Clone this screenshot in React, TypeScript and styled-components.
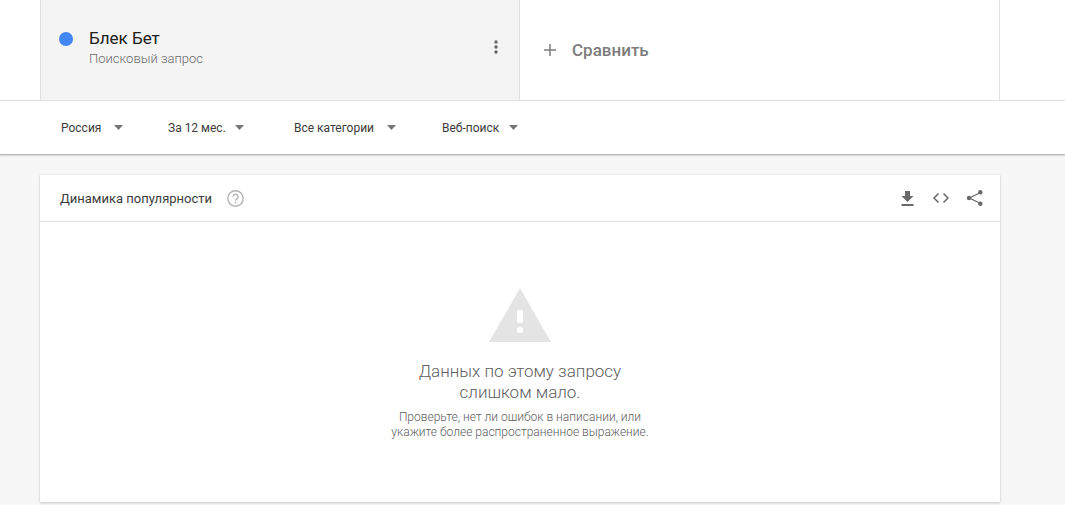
import React from 'react';
import styled, { createGlobalStyle } from 'styled-components';

const GlobalStyle = createGlobalStyle`
  *, *::before, *::after { box-sizing: border-box; }
  body {
    margin: 0;
    background: #f7f7f7;
    color: #212121;
    font-family: Roboto, 'Liberation Sans', sans-serif;
  }
  button, select { font-family: inherit; color: inherit; }
  h1, h2, p { margin: 0; font-weight: 400; }
`;

const Terms = styled.header`
  display: grid;
  grid-template-columns: 1fr 1fr;
  padding: 0 65px 0 40px;
  background: #fff;
  border-bottom: 1px solid #e0e0e0;
`;

const TermCard = styled.section`
  display: flex;
  align-items: flex-start;
  height: 100px;
  padding: 26px 14px 0 18px;
  background: #f4f4f4;
  border: solid #e0e0e0;
  border-width: 0 1px;
`;

const Dot = styled.span`
  width: 14px;
  height: 14px;
  margin: 6px 16px 0 0;
  border-radius: 50%;
  background: #4285f4;
`;

const TermText = styled.div`
  flex: 1;
`;

const TermName = styled.h1`
  font-size: 17px;
  line-height: 24px;
`;

const TermKind = styled.p`
  font-size: 13px;
  font-weight: 300;
  line-height: 18px;
  color: #6b6b6b;
`;

const IconButton = styled.button`
  display: flex;
  padding: 0;
  border: 0;
  background: none;
  color: #696969;
  cursor: pointer;
`;

const MenuButton = styled(IconButton)`
  margin-top: 12px;
`;

const Compare = styled.button`
  display: flex;
  align-items: center;
  gap: 16px;
  height: 100px;
  padding: 0 24px;
  border: 0;
  border-right: 1px solid #e0e0e0;
  background: #fff;
  color: #7c7c7c;
  font-size: 17px;
  font-weight: 500;
  line-height: 24px;
  cursor: pointer;
`;

const Filters = styled.nav`
  position: relative;
  display: grid;
  grid-template-columns: 107px 126px 148px 76px;
  align-items: center;
  height: 53px;
  padding-left: 61px;
  background: #fff;
  box-shadow: 0 1px 1px #b8b8b8, 0 2px 2px #dedede;
`;

const Dropdown = styled.label<{ $width: number }>`
  display: grid;
  align-items: center;
  width: ${(p) => p.$width}px;

  select, svg { grid-area: 1 / 1; }
  svg { justify-self: end; pointer-events: none; }
`;

const Select = styled.select`
  appearance: none;
  width: 100%;
  height: 24px;
  padding: 0;
  border: 0;
  background: none;
  color: #3c3c3c;
  font-size: 12px;
  cursor: pointer;
`;

const Main = styled.main`
  padding: 21px 65px 24px 40px;
`;

const Card = styled.section`
  background: #fff;
  box-shadow: 0 1px 2px #c8c8c8, 0 0 2px #e4e4e4;
`;

const CardHeader = styled.div`
  display: flex;
  align-items: center;
  height: 47px;
  padding: 0 16px 0 20px;
  border-bottom: 1px solid #e0e0e0;
`;

const CardTitle = styled.h2`
  font-size: 13px;
  line-height: 21px;
  margin-right: 15px;
  color: #3c3c3c;
`;

const HelpButton = styled(IconButton)`
  color: #b3b3b3;
`;

const Actions = styled.div`
  display: flex;
  align-items: center;
  gap: 16px;
  margin-left: auto;
`;

const Empty = styled.div`
  display: flex;
  flex-direction: column;
  align-items: center;
  height: 280px;
  padding-top: 66px;
  text-align: center;
`;

const EmptyTitle = styled.p`
  margin-top: 19px;
  font-size: 17px;
  font-weight: 300;
  line-height: 21px;
  color: #606060;
`;

const EmptyHint = styled.p`
  margin-top: 7px;
  font-size: 12px;
  font-weight: 300;
  line-height: 15px;
  color: #606060;
`;

const filters = [
  { name: 'Регион', value: 'Россия', width: 62 },
  { name: 'Период', value: 'За 12 мес.', width: 76 },
  { name: 'Категория', value: 'Все категории', width: 102 },
  { name: 'Тип поиска', value: 'Веб-поиск', width: 76 },
];

export default function App() {
  return (
    <>
      <GlobalStyle />
      <Terms>
        <TermCard>
          <Dot />
          <TermText>
            <TermName>Блек Бет</TermName>
            <TermKind>Поисковый запрос</TermKind>
          </TermText>
          <MenuButton aria-label="Меню">
            <svg width="18" height="18" viewBox="0 0 18 18" fill="currentColor">
              <circle cx="9" cy="4" r="1.7" />
              <circle cx="9" cy="9" r="1.7" />
              <circle cx="9" cy="14" r="1.7" />
            </svg>
          </MenuButton>
        </TermCard>
        <Compare>
          <svg width="12" height="12" viewBox="0 0 12 12" stroke="currentColor" strokeWidth="1.5">
            <path d="M6 0v12M0 6h12" />
          </svg>
          Сравнить
        </Compare>
      </Terms>
      <Filters>
        {filters.map((f) => (
          <Dropdown key={f.name} $width={f.width}>
            <Select aria-label={f.name}>
              <option>{f.value}</option>
            </Select>
            <svg width="9" height="5" viewBox="0 0 9 5" fill="#757575">
              <path d="M0 0h9L4.5 5z" />
            </svg>
          </Dropdown>
        ))}
      </Filters>
      <Main>
        <Card>
          <CardHeader>
            <CardTitle>Динамика популярности</CardTitle>
            <HelpButton aria-label="Справка">
              <svg width="17" height="17" viewBox="0 0 17 17" fill="none" stroke="currentColor" strokeWidth="1.4">
                <circle cx="8.5" cy="8.5" r="7.7" />
                <path d="M6 6.8a2.5 2.5 0 1 1 3.9 2.1c-.9.6-1.4 1-1.4 1.9M8.5 12v1.5" />
              </svg>
            </HelpButton>
            <Actions>
              <IconButton aria-label="Скачать">
                <svg width="18" height="18" viewBox="0 0 18 18" fill="currentColor">
                  <path d="M7 2h5v5h3.500l-6 6-6-6H7zM3.500 15h12v2h-12z" />
                </svg>
              </IconButton>
              <IconButton aria-label="Встроить">
                <svg width="18" height="18" viewBox="0 0 18 18" fill="none" stroke="currentColor" strokeWidth="1.5">
                  <path d="M6.5 4.5 2 9l4.500 4.500M11.500 4.500 16 9l-4.500 4.500" />
                </svg>
              </IconButton>
              <IconButton aria-label="Поделиться">
                <svg width="18" height="18" viewBox="0 0 18 18" fill="currentColor">
                  <path d="M14.5 3.5 3.500 9l11 5.500" fill="none" stroke="currentColor" strokeWidth="1.3" />
                  <circle cx="14.3" cy="3.2" r="2.2" />
                  <circle cx="3" cy="9" r="2.2" />
                  <circle cx="14.3" cy="14.8" r="2.2" />
                </svg>
              </IconButton>
            </Actions>
          </CardHeader>
          <Empty>
            <svg width="62" height="54" viewBox="0 0 62 54">
              <path d="M31 0 62 54H0z" fill="#e4e4e4" />
              <rect x="28" y="22" width="6" height="13" rx="1.5" fill="#fff" />
              <rect x="28" y="39" width="6" height="6" rx="2" fill="#fff" />
            </svg>
            <EmptyTitle>
              Данных по этому запросу
              <br />
              слишком мало.
            </EmptyTitle>
            <EmptyHint>
              Проверьте, нет ли ошибок в написании, или
              <br />
              укажите более распространенное выражение.
            </EmptyHint>
          </Empty>
        </Card>
      </Main>
    </>
  );
}
